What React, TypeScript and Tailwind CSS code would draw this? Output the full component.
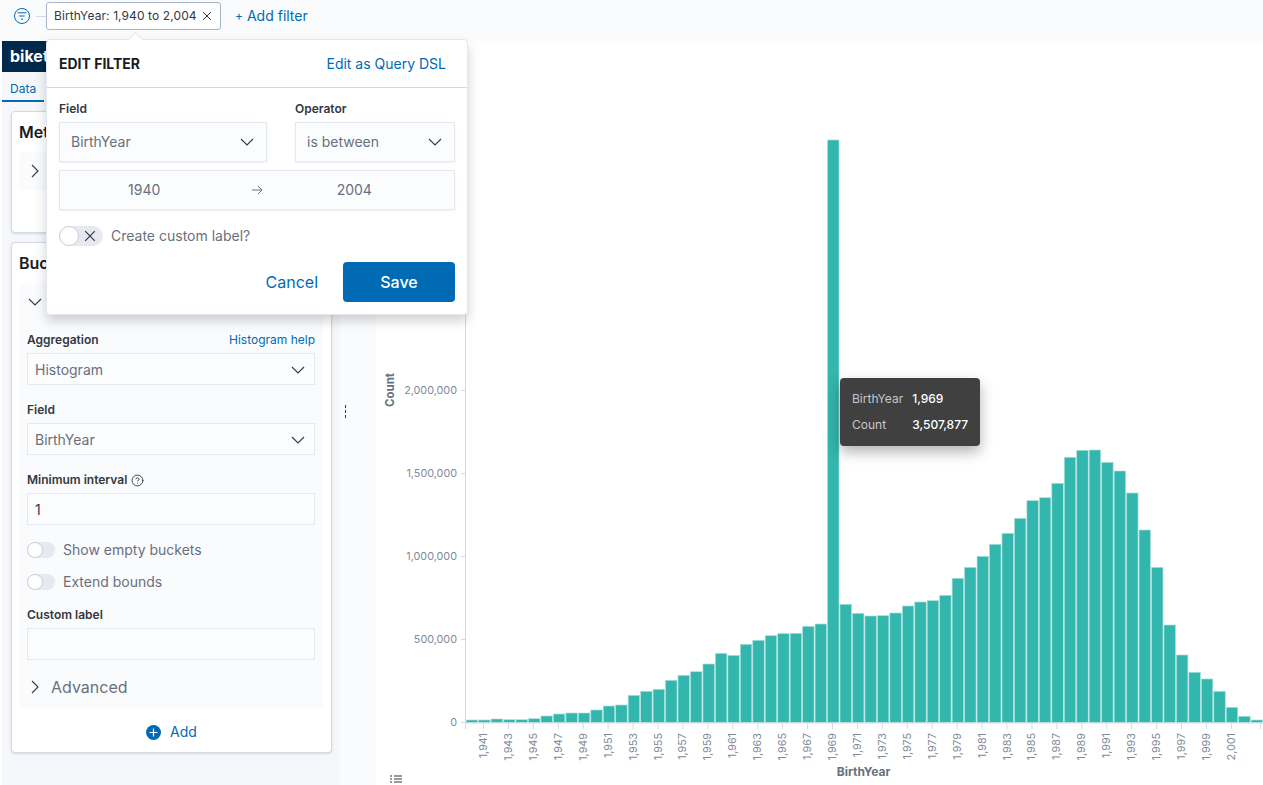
import { CircleHelp } from "lucide-react";

// bar tops in page pixels, 1940 to 2003
const barTops = [
  720, 720, 719, 719.7, 719.7, 718.7, 716, 714, 713, 713, 710, 706, 705, 695.3, 691.3, 689.3,
  680.3, 675.3, 671.7, 664, 653.3, 655.3, 644.3, 640.3, 635.7, 633.7, 633.3, 626.3, 624, 140,
  604.3, 613.3, 616, 615.7, 613, 606, 602, 600.7, 595.3, 578.3, 567.3, 556.3, 544.3, 533.3, 518.3,
  500.7, 497.7, 483.3, 457.3, 450.3, 450, 462.3, 471, 493, 530, 567.3, 625, 655, 672.3, 679, 691.3,
  707.3, 716.3, 720,
];

const yTicks = [
  { label: "0", y: 722 },
  { label: "500,000", y: 639 },
  { label: "1,000,000", y: 556 },
  { label: "1,500,000", y: 473 },
  { label: "2,000,000", y: 390 },
];

const xTicks = Array.from({ length: 31 }, (_, i) => 1941 + i * 2);

function ArrowDown() {
  return (
    <svg width="14" height="8" viewBox="0 0 14 8" fill="none" stroke="#343741" strokeWidth="1.1">
      <path d="M1 1l6 6 6-6" />
    </svg>
  );
}

function ArrowRight() {
  return (
    <svg width="8" height="14" viewBox="0 0 8 14" fill="none" stroke="#343741" strokeWidth="1.1">
      <path d="M1 1l6 6-6 6" />
    </svg>
  );
}

function Cross({ size = 10 }: { size?: number }) {
  return (
    <svg width={size} height={size} viewBox="0 0 10 10" fill="none" stroke="#343741" strokeWidth="1">
      <path d="M1 1l8 8M9 1l-8 8" />
    </svg>
  );
}

function Label({ children }: { children: React.ReactNode }) {
  return <div className="h-4 text-xs leading-4 font-semibold text-[#343741]">{children}</div>;
}

function Select({ value, className }: { value: string; className: string }) {
  return (
    <div
      className={`flex items-center justify-between border border-[#e4e8f0] bg-[#fbfcfd] text-sm text-[#69707d] ${className}`}
    >
      <span>{value}</span>
      <ArrowDown />
    </div>
  );
}

function SmallToggle({ label }: { label: string }) {
  return (
    <div className="flex h-4 items-center gap-2">
      <div className="h-4 w-7 rounded-full bg-[#e6e9f0]">
        <div className="h-4 w-4 rounded-full border border-[#c9cfda] bg-white" />
      </div>
      <span className="text-sm text-[#69707d]">{label}</span>
    </div>
  );
}

function FilterBar() {
  return (
    <div className="flex h-[41px] items-start bg-[#fafbfd] pl-[14px] pt-[2px]">
      <svg width="16" height="16" viewBox="0 0 16 16" fill="none" stroke="#006bb4" className="mt-[6px]">
        <circle cx="8" cy="8" r="7.5" />
        <path d="M3.5 4.8h9M5.2 8h5.6M7 11.2h2" />
      </svg>
      <div className="ml-[6px] mt-[14px] h-px w-[10px] bg-[#d3dae6]" />
      <div className="flex h-7 w-[175px] items-center gap-[5px] rounded-[3px] border border-[#a9b4c6] bg-white pl-[7px] text-xs tracking-[0.1px] text-[#343741]">
        <span>BirthYear: 1,940 to 2,004</span>
        <Cross size={10} />
      </div>
      <div className="ml-[14px] flex h-7 items-center text-sm text-[#006bb4]">
        <span className="mr-[4px] text-xs">+</span>
        <span>Add filter</span>
      </div>
    </div>
  );
}

function Sidebar() {
  return (
    <aside className="ml-[2px] w-[338px] shrink-0 bg-[#f5f7fa]">
      <div className="flex h-[31px] items-center bg-[#00294b] pb-[1px] pl-2 text-base font-bold text-white">
        biket
      </div>
      <div className="h-[30px] w-[42px] border-b-2 border-[#006bb4] pl-2 pt-[9px] text-xs leading-4 text-[#006bb4]">
        Data
      </div>
      <div className="flex w-[330px] flex-col gap-[9px] pl-[9px] pt-[9px]">
        <section className="h-[122px] rounded border border-[#d3dae6] bg-white px-[7px] pt-2 shadow-sm">
          <h2 className="text-base leading-6 font-semibold text-[#1a1c21]">Metrics</h2>
          <div className="mt-2 flex h-[38px] items-center rounded bg-[#fafbfd] pl-[12px]">
            <ArrowRight />
          </div>
        </section>
        <section className="h-[511px] rounded border border-[#d3dae6] bg-white pt-2 shadow-sm">
          <h2 className="px-[7px] text-base leading-6 font-semibold text-[#1a1c21]">Buckets</h2>
          <div className="ml-[7px] mr-[8px] mt-2 h-[425px] rounded bg-[#fafbfd] px-2">
            <div className="flex h-[38px] items-center pl-[1px]">
              <ArrowDown />
            </div>
            <div className="mt-[11px] flex items-center justify-between">
              <Label>Aggregation</Label>
              <span className="text-xs text-[#006bb4]">Histogram help</span>
            </div>
            <Select value="Histogram" className="mt-[5px] h-8 pl-[7px] pr-[9px] pt-[1px]" />
            <div className="mt-[17px]">
              <Label>Field</Label>
            </div>
            <Select value="BirthYear" className="mt-[5px] h-8 pl-[7px] pr-[9px] pt-[1px]" />
            <div className="mt-[17px] flex items-center gap-1">
              <Label>Minimum interval</Label>
              <CircleHelp size={13} strokeWidth={1.7} className="text-[#343741]" />
            </div>
            <div className="mt-[5px] flex h-8 items-center border border-[#e4e8f0] bg-[#fbfcfd] pl-[7px] pt-[1px] text-sm text-[#343741]">
              1
            </div>
            <div className="mt-[17px] flex flex-col gap-4">
              <SmallToggle label="Show empty buckets" />
              <SmallToggle label="Extend bounds" />
            </div>
            <div className="mt-[17px]">
              <Label>Custom label</Label>
            </div>
            <div className="mt-[5px] h-8 border border-[#e4e8f0] bg-[#fbfcfd]" />
            <div className="mt-[15px] flex h-6 items-center gap-3 pl-[4px] text-base text-[#69707d]">
              <ArrowRight />
              <span>Advanced</span>
            </div>
          </div>
          <div className="flex h-11 items-center justify-center gap-[9px] pt-1 text-sm text-[#006bb4]">
            <svg width="15" height="15" viewBox="0 0 15 15">
              <circle cx="7.5" cy="7.5" r="7.5" fill="#006bb4" />
              <path d="M7.5 3.5v8M3.5 7.5h8" stroke="#fff" strokeWidth="1.2" />
            </svg>
            <span>Add</span>
          </div>
        </section>
      </div>
    </aside>
  );
}

function Chart() {
  return (
    <svg
      viewBox="376 41 887 744"
      width="887"
      height="744"
      className="block"
      fontFamily="Inter, sans-serif"
      fontSize="10.8"
    >
      <line x1="465.5" y1="41" x2="465.5" y2="722" stroke="#d3dae6" />
      <text
        transform="translate(394 390) rotate(-90)"
        textAnchor="middle"
        fontWeight="700"
        fontSize="11.5"
        fill="#69707d"
      >
        Count
      </text>
      {yTicks.map((t) => (
        <g key={t.label}>
          <line x1="461" x2="465" y1={t.y + 0.5} y2={t.y + 0.5} stroke="#d3dae6" />
          <text x="457" y={t.y + 4} textAnchor="end" fill="#818a9a">
            {t.label}
          </text>
        </g>
      ))}
      {barTops.map((top, i) => (
        <rect
          key={i}
          x={466.2 + i * 12.46}
          y={top}
          width={11.46}
          height={722.5 - top}
          fill="#32b6ad"
          stroke="#a8e0db"
          strokeWidth="0.7"
        />
      ))}
      <line x1="465" y1="723" x2="1263" y2="723" stroke="#d3dae6" />
      <line x1="465.5" x2="465.5" y1="723" y2="729" stroke="#d3dae6" />
      <line x1="1260.5" x2="1260.5" y1="723" y2="729" stroke="#d3dae6" />
      {xTicks.map((year, i) => {
        const x = 483.5 + i * 24.93;
        return (
          <g key={year}>
            <line x1={x} x2={x} y1="723" y2="729" stroke="#d3dae6" />
            <text
              transform={`translate(${x + 3.5} 733) rotate(-90)`}
              textAnchor="end"
              fill="#818a9a"
            >
              {year.toLocaleString("en-US")}
            </text>
          </g>
        );
      })}
      <text x="863.5" y="776" textAnchor="middle" fontWeight="700" fontSize="12" fill="#69707d">
        BirthYear
      </text>
      <path d="M390 776h2M394 776h8M390 779h2M394 779h8M390 782h2M394 782h8" stroke="#343741" />
    </svg>
  );
}

function EditFilterPopover() {
  return (
    <div className="absolute left-[46px] top-[39px] h-[276px] w-[422px] rounded border border-[#e3e7ef] bg-white text-[#343741] shadow-[0_6px_12px_rgba(0,0,0,0.18)]">
      <div className="absolute -top-[6px] left-[83px] h-[11px] w-[11px] rotate-45 border-l border-t border-[#e3e7ef] bg-white" />
      <div className="flex h-[48px] items-center justify-between border-b border-[#d3dae6] pl-3 pr-[21px]">
        <span className="text-sm font-bold text-[#1a1c21]">EDIT FILTER</span>
        <span className="text-sm text-[#006bb4]">Edit as Query DSL</span>
      </div>
      <div className="px-3 pt-[13px]">
        <div className="flex gap-7">
          <div className="w-52">
            <Label>Field</Label>
            <Select value="BirthYear" className="mt-[5px] h-10 pl-[11px] pr-[12px] shadow-[0_1px_2px_rgba(0,0,0,0.06)]" />
          </div>
          <div className="w-40">
            <Label>Operator</Label>
            <Select value="is between" className="mt-[5px] h-10 pl-[11px] pr-[12px] shadow-[0_1px_2px_rgba(0,0,0,0.06)]" />
          </div>
        </div>
        <div className="mt-2 grid h-10 grid-cols-[1fr_24px_1fr] items-center justify-items-center border border-[#e4e8f0] bg-[#fbfcfd] pl-[1px] text-sm text-[#69707d] shadow-[0_1px_2px_rgba(0,0,0,0.06)]">
          <span className="pr-[18px]">1940</span>
          <svg width="11" height="10" viewBox="0 0 11 10" fill="none" stroke="#69707d">
            <path d="M0 5h10M6 1l4 4-4 4" />
          </svg>
          <span className="pr-[15px]">2004</span>
        </div>
        <div className="mt-4 flex h-5 items-center gap-2">
          <div className="relative flex h-5 w-11 items-center justify-end rounded-full bg-[#e6e9f0] pr-[7px]">
            <div className="absolute left-0 top-0 h-5 w-5 rounded-full border border-[#c9cfda] bg-white" />
            <Cross size={12} />
          </div>
          <span className="text-sm text-[#69707d]">Create custom label?</span>
        </div>
        <div className="mt-4 flex items-center justify-end">
          <span className="mr-[25px] text-base text-[#006bb4]">Cancel</span>
          <button className="h-10 w-28 rounded bg-[#006bb4] text-base font-medium text-white">Save</button>
        </div>
      </div>
    </div>
  );
}

function ChartTooltip() {
  return (
    <div className="absolute left-[840px] top-[378px] grid h-[68px] w-[140px] grid-cols-[auto_auto] content-center justify-start gap-x-[9px] gap-y-[10px] rounded bg-[#404040] pl-3 text-xs leading-4 shadow-[0_6px_14px_rgba(0,0,0,0.3)]">
      <span className="text-[#c6c6c6]">BirthYear</span>
      <span className="font-medium text-white">1,969</span>
      <span className="text-[#c6c6c6]">Count</span>
      <span className="font-medium text-white">3,507,877</span>
    </div>
  );
}

export default function App() {
  return (
    <div className="relative h-[785px] w-[1263px] overflow-hidden bg-white font-['Inter',sans-serif]">
      <FilterBar />
      <div className="flex h-[744px]">
        <Sidebar />
        <div className="flex w-9 shrink-0 items-center bg-[#fafbfd] pb-[3px] pl-[5px]">
          <div className="h-[13px] border-l border-dashed border-[#343741]" />
        </div>
        <Chart />
      </div>
      <EditFilterPopover />
      <ChartTooltip />
    </div>
  );
}
